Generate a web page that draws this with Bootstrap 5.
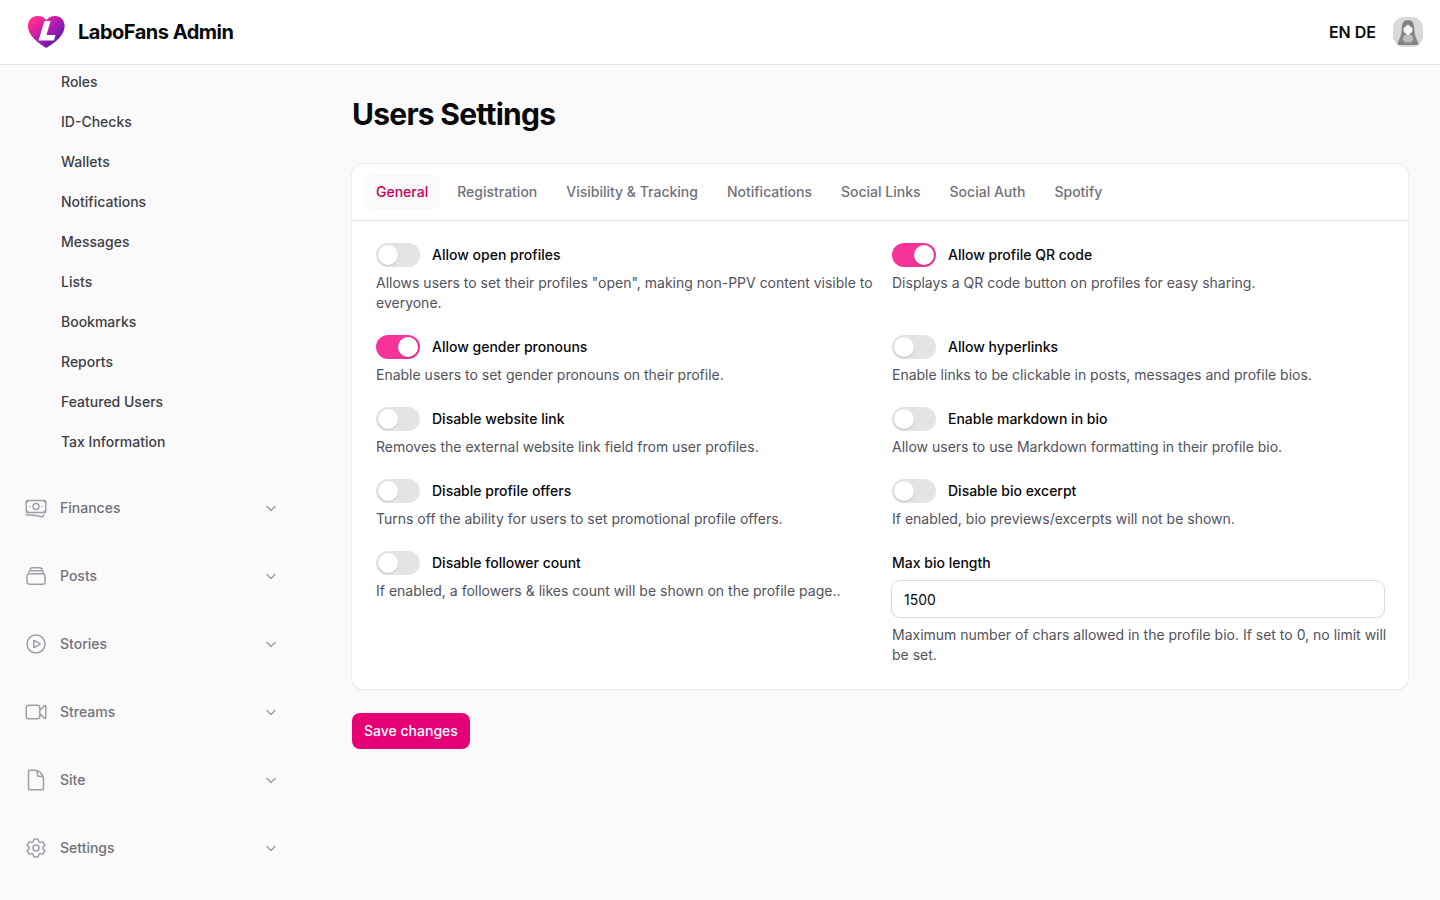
<!DOCTYPE html>
<html lang="en">
<head>
<meta charset="utf-8">
<meta name="viewport" content="width=device-width, initial-scale=1">
<title>Users Settings - LaboFans Admin</title>
<link href="https://cdn.jsdelivr.net/npm/bootstrap@5.3.0/dist/css/bootstrap.min.css" rel="stylesheet">
<style>
:root{--pink-500:#f6339a;--pink-600:#e60076;--pink-700:#c6005c;--ink:#09090b;--line:#e4e4e7}
body{font-family:Inter,"Liberation Sans",sans-serif;font-size:14px;line-height:20px;color:var(--ink);background:#fafafa}
a{text-decoration:none;color:inherit}
.topbar{height:64px;padding:0 16px 0 28px;box-shadow:0 1px 0 var(--line);z-index:1020}
.brand-name{font-size:20px;line-height:28px;font-weight:700;letter-spacing:-.025em}
.lang{font-size:16px;line-height:24px;font-weight:600}
.side{width:320px;padding:0 32px 24px 24px}
.side .sub-link{display:block;padding:8px 12px;color:#3f3f46;font-weight:500}
.side .sub-list{padding-left:25px}
.groups{gap:28px;padding-top:28px}
.group-btn{height:40px;gap:12px;padding:0 9px 0 0;border:0;background:none;color:#71717b;font-weight:500;text-align:left}
.side svg{fill:none;stroke:#9f9fa9;stroke-width:1.5;stroke-linecap:round;stroke-linejoin:round}
.page-main{min-width:0;padding:32px}
h1{font-size:30px;line-height:36px;font-weight:700;letter-spacing:-.025em}
.page-title{margin-bottom:32px}
.panel{border-radius:12px;background:#fff;box-shadow:0 0 0 1px #ececee,0 1px 2px 0 rgba(0,0,0,.08)}
.tab-bar{gap:5px;padding:10px 12px;border-bottom:1px solid var(--line)}
.tab-btn{padding:8px 12px;border:0;border-radius:8px;background:none;color:#71717b;font-weight:500}
.tab-btn.active{background:#fafafa;color:var(--pink-700)}
.fields{padding:22px 24px 24px}
.fields-row{--bs-gutter-x:24px;row-gap:22px}
.field-label{font-weight:500;line-height:24px}
.hint{color:#52525c;margin:6px -8px 0 0}
.switch-row{gap:12px;min-height:24px;padding:0;margin:0}
.form-switch .form-check-input{width:44px;height:24px;margin:0;border:0;float:none;background-color:var(--line);background-image:none;position:relative;flex:none}
.form-switch .form-check-input::after{content:"";position:absolute;top:2px;left:2px;width:20px;height:20px;border-radius:50%;background:#fff;box-shadow:0 1px 2px rgba(0,0,0,.15)}
.form-switch .form-check-input:checked{background-color:var(--pink-500);background-image:none}
.form-switch .form-check-input:checked::after{left:22px}
.text-field{height:36px;margin-top:6px;padding:0 12px;border:0;border-radius:8px;font-size:14px;line-height:20px;color:var(--ink);box-shadow:0 0 0 1px #dcdcdf,0 1px 2px 0 rgba(0,0,0,.1)}
.text-field + .hint{margin-top:8px}
.save-btn{height:36px;padding:0 12px;border:0;border-radius:8px;background:var(--pink-600);color:#fff;font-size:14px;line-height:20px;font-weight:500;margin-top:24px}
</style>
</head>
<body>
<header class="topbar bg-white sticky-top d-flex align-items-center justify-content-between">
  <a href="#" class="d-flex align-items-center">
    <svg width="38" height="34" viewBox="0 0 38 34" aria-hidden="true">
      <defs><linearGradient id="heart" x1="0" y1="0" x2="1" y2="1"><stop offset=".15" stop-color="#ff2a92"/><stop offset=".55" stop-color="#a31cb4"/><stop offset=".9" stop-color="#4b1a9e"/></linearGradient></defs>
      <path fill="url(#heart)" d="M18.300 33C13 29.500 0 22 0 11 0 5 4.300 1 9.500 1c4 0 7 1.500 8.800 4.200C20.100 2.500 23.300 1 27.300 1 32.500 1 36.600 5 36.600 11 36.600 22 23.600 29.500 18.300 33Z"/>
      <path fill="#fff" d="M16.500 6h6L18.500 20H27.500L26 25.500H10.500Z"/>
    </svg>
    <span class="brand-name ms-2 ps-1">LaboFans Admin</span>
  </a>
  <div class="d-flex align-items-center gap-3">
    <nav class="lang" aria-label="Language"><a href="#en">EN</a> <a href="#de">DE</a></nav>
    <a href="#profile" aria-label="Profile" class="d-block lh-1">
      <svg width="32" height="32" viewBox="0 0 32 32"><defs><clipPath id="av"><rect x="1" y="1" width="30" height="30" rx="11"/></clipPath></defs>
      <g clip-path="url(#av)"><path fill="#d9d9d9" d="M0 0h32v32H0z"/>
      <path fill="#858585" d="M16 4c-4.500 0-6 3.500-6.200 8-.2 6-1.300 9-3.800 14l-.5 3h21l-.5-3c-2.500-5-3.600-8-3.800-14C22 7.500 20.500 4 16 4Z"/>
      <path fill="#bdbdbd" d="M12 19.500l4-2 4 2 1.500 3.500-2.500 3.500h-6L10.500 23Z"/>
      <path fill="#f6f6f6" d="M16 8.500l4.700 4-.7 3.500-4 3.500-4-3.500-.7-3.500Z"/></g></svg>
    </a>
  </div>
</header>

<div class="d-flex">
  <aside class="side flex-shrink-0 d-none d-md-block">
    <nav aria-label="Main">
      <ul class="sub-list list-unstyled d-flex flex-column gap-1 mb-0">
        <li><a class="sub-link" href="#">Roles</a></li>
        <li><a class="sub-link" href="#">ID-Checks</a></li>
        <li><a class="sub-link" href="#">Wallets</a></li>
        <li><a class="sub-link" href="#">Notifications</a></li>
        <li><a class="sub-link" href="#">Messages</a></li>
        <li><a class="sub-link" href="#">Lists</a></li>
        <li><a class="sub-link" href="#">Bookmarks</a></li>
        <li><a class="sub-link" href="#">Reports</a></li>
        <li><a class="sub-link" href="#">Featured Users</a></li>
        <li><a class="sub-link" href="#">Tax Information</a></li>
      </ul>
      <div class="groups d-flex flex-column">
        <button type="button" class="group-btn d-flex align-items-center"><svg width="24" height="24" viewBox="0 0 24 24"><path d="M2.250 18.750a60.070 60.070 0 0 1 15.797 2.101c.727.198 1.453-.342 1.453-1.096V18.750M3.750 4.500v.750A.750.750 0 0 1 3 6h-.750m0 0v-.375c0-.621.504-1.125 1.125-1.125H20.250M2.250 6v9m18-10.500v.750c0 .414.336.750.750.750h.750m-1.500-1.500h.375c.621 0 1.125.504 1.125 1.125v9.750c0 .621-.504 1.125-1.125 1.125h-.375m1.500-1.500H21a.750.750 0 0 0-.750.750v.750m0 0H3.750m0 0h-.375a1.125 1.125 0 0 1-1.125-1.125V15m1.500 1.500v-.750A.750.750 0 0 0 3 15h-.750M15 10.500a3 3 0 1 1-6 0 3 3 0 0 1 6 0Zm3 0h.008v.008H18V10.500Zm-12 0h.008v.008H6V10.500Z"/></svg><span class="flex-grow-1">Finances</span><svg width="16" height="16" viewBox="0 0 16 16"><path d="m4 6.500 4 4 4-4"/></svg></button>
        <button type="button" class="group-btn d-flex align-items-center"><svg width="24" height="24" viewBox="0 0 24 24"><path d="M6 6.878V6a2.250 2.250 0 0 1 2.250-2.250h7.500A2.250 2.250 0 0 1 18 6v.878m-12 0c.235-.083.487-.128.750-.128h10.500c.263 0 .515.045.750.128m-12 0A2.250 2.250 0 0 0 4.500 9v.878m13.500-3A2.250 2.250 0 0 1 19.500 9v.878m0 0a2.246 2.246 0 0 0-.750-.128H5.250c-.263 0-.515.045-.750.128m15 0A2.250 2.250 0 0 1 21 12v6a2.250 2.250 0 0 1-2.250 2.250H5.250A2.250 2.250 0 0 1 3 18v-6c0-.980.626-1.813 1.500-2.122"/></svg><span class="flex-grow-1">Posts</span><svg width="16" height="16" viewBox="0 0 16 16"><path d="m4 6.500 4 4 4-4"/></svg></button>
        <button type="button" class="group-btn d-flex align-items-center"><svg width="24" height="24" viewBox="0 0 24 24"><path d="M21 12a9 9 0 1 1-18 0 9 9 0 0 1 18 0Z"/><path d="M15.910 11.672a.375.375 0 0 1 0 .656l-5.603 3.113a.375.375 0 0 1-.557-.328V8.887c0-.286.307-.466.557-.327l5.603 3.112Z"/></svg><span class="flex-grow-1">Stories</span><svg width="16" height="16" viewBox="0 0 16 16"><path d="m4 6.500 4 4 4-4"/></svg></button>
        <button type="button" class="group-btn d-flex align-items-center"><svg width="24" height="24" viewBox="0 0 24 24"><path d="m15.750 10.500 4.720-4.720a.750.750 0 0 1 1.280.530v11.380a.750.750 0 0 1-1.280.530l-4.720-4.720M4.500 18.750h9a2.250 2.250 0 0 0 2.250-2.250v-9a2.250 2.250 0 0 0-2.250-2.250h-9A2.250 2.250 0 0 0 2.250 7.500v9a2.250 2.250 0 0 0 2.250 2.250Z"/></svg><span class="flex-grow-1">Streams</span><svg width="16" height="16" viewBox="0 0 16 16"><path d="m4 6.500 4 4 4-4"/></svg></button>
        <button type="button" class="group-btn d-flex align-items-center"><svg width="24" height="24" viewBox="0 0 24 24"><path d="M19.500 14.250v-2.625a3.375 3.375 0 0 0-3.375-3.375h-1.500A1.125 1.125 0 0 1 13.500 7.125v-1.500a3.375 3.375 0 0 0-3.375-3.375H8.250m2.250 0H5.625c-.621 0-1.125.504-1.125 1.125v17.250c0 .621.504 1.125 1.125 1.125h12.750c.621 0 1.125-.504 1.125-1.125V11.250a9 9 0 0 0-9-9Z"/></svg><span class="flex-grow-1">Site</span><svg width="16" height="16" viewBox="0 0 16 16"><path d="m4 6.500 4 4 4-4"/></svg></button>
        <button type="button" class="group-btn d-flex align-items-center"><svg width="24" height="24" viewBox="0 0 24 24"><path d="M9.594 3.940c.090-.542.560-.940 1.110-.940h2.593c.550 0 1.020.398 1.110.940l.213 1.281c.063.374.313.686.645.870.074.040.147.083.220.127.325.196.720.257 1.075.124l1.217-.456a1.125 1.125 0 0 1 1.370.490l1.296 2.247a1.125 1.125 0 0 1-.260 1.431l-1.003.827c-.293.241-.438.613-.430.992a7.723 7.723 0 0 1 0 .255c-.008.378.137.750.430.991l1.004.827c.424.350.534.955.260 1.430l-1.298 2.247a1.125 1.125 0 0 1-1.369.491l-1.217-.456c-.355-.133-.750-.072-1.076.124a6.470 6.470 0 0 1-.220.128c-.331.183-.581.495-.644.869l-.213 1.281c-.090.543-.560.940-1.110.940h-2.594c-.550 0-1.019-.398-1.110-.940l-.213-1.281c-.062-.374-.312-.686-.644-.870a6.520 6.520 0 0 1-.220-.127c-.325-.196-.720-.257-1.076-.124l-1.217.456a1.125 1.125 0 0 1-1.369-.490l-1.297-2.247a1.125 1.125 0 0 1 .260-1.431l1.004-.827c.292-.240.437-.613.430-.991a6.932 6.932 0 0 1 0-.255c.007-.380-.138-.751-.430-.992l-1.004-.827a1.125 1.125 0 0 1-.260-1.430l1.297-2.247a1.125 1.125 0 0 1 1.370-.491l1.216.456c.356.133.751.072 1.076-.124.072-.044.146-.086.220-.128.332-.183.582-.495.644-.869l.214-1.280Z"/><path d="M15 12a3 3 0 1 1-6 0 3 3 0 0 1 6 0Z"/></svg><span class="flex-grow-1">Settings</span><svg width="16" height="16" viewBox="0 0 16 16"><path d="m4 6.500 4 4 4-4"/></svg></button>
      </div>
    </nav>
  </aside>

  <main class="page-main flex-grow-1">
    <h1 class="page-title">Users Settings</h1>
    <form>
      <section class="panel">
        <div class="tab-bar d-flex flex-wrap" role="tablist">
          <button type="button" role="tab" aria-selected="true" class="tab-btn active">General</button>
          <button type="button" role="tab" class="tab-btn">Registration</button>
          <button type="button" role="tab" class="tab-btn">Visibility &amp; Tracking</button>
          <button type="button" role="tab" class="tab-btn">Notifications</button>
          <button type="button" role="tab" class="tab-btn">Social Links</button>
          <button type="button" role="tab" class="tab-btn">Social Auth</button>
          <button type="button" role="tab" class="tab-btn">Spotify</button>
        </div>
        <div class="fields">
          <div class="row fields-row">
            <div class="col-12 col-lg-6"><div class="form-check form-switch switch-row d-flex align-items-center"><input class="form-check-input" type="checkbox" role="switch" id="open"><label class="field-label" for="open">Allow open profiles</label></div><p class="hint">Allows users to set their profiles "open", making non-PPV content visible to everyone.</p></div>
            <div class="col-12 col-lg-6"><div class="form-check form-switch switch-row d-flex align-items-center"><input class="form-check-input" type="checkbox" role="switch" id="qr" checked><label class="field-label" for="qr">Allow profile QR code</label></div><p class="hint">Displays a QR code button on profiles for easy sharing.</p></div>
            <div class="col-12 col-lg-6"><div class="form-check form-switch switch-row d-flex align-items-center"><input class="form-check-input" type="checkbox" role="switch" id="pronouns" checked><label class="field-label" for="pronouns">Allow gender pronouns</label></div><p class="hint">Enable users to set gender pronouns on their profile.</p></div>
            <div class="col-12 col-lg-6"><div class="form-check form-switch switch-row d-flex align-items-center"><input class="form-check-input" type="checkbox" role="switch" id="links"><label class="field-label" for="links">Allow hyperlinks</label></div><p class="hint">Enable links to be clickable in posts, messages and profile bios.</p></div>
            <div class="col-12 col-lg-6"><div class="form-check form-switch switch-row d-flex align-items-center"><input class="form-check-input" type="checkbox" role="switch" id="website"><label class="field-label" for="website">Disable website link</label></div><p class="hint">Removes the external website link field from user profiles.</p></div>
            <div class="col-12 col-lg-6"><div class="form-check form-switch switch-row d-flex align-items-center"><input class="form-check-input" type="checkbox" role="switch" id="markdown"><label class="field-label" for="markdown">Enable markdown in bio</label></div><p class="hint">Allow users to use Markdown formatting in their profile bio.</p></div>
            <div class="col-12 col-lg-6"><div class="form-check form-switch switch-row d-flex align-items-center"><input class="form-check-input" type="checkbox" role="switch" id="offers"><label class="field-label" for="offers">Disable profile offers</label></div><p class="hint">Turns off the ability for users to set promotional profile offers.</p></div>
            <div class="col-12 col-lg-6"><div class="form-check form-switch switch-row d-flex align-items-center"><input class="form-check-input" type="checkbox" role="switch" id="excerpt"><label class="field-label" for="excerpt">Disable bio excerpt</label></div><p class="hint">If enabled, bio previews/excerpts will not be shown.</p></div>
            <div class="col-12 col-lg-6"><div class="form-check form-switch switch-row d-flex align-items-center"><input class="form-check-input" type="checkbox" role="switch" id="followers"><label class="field-label" for="followers">Disable follower count</label></div><p class="hint">If enabled, a followers &amp; likes count will be shown on the profile page..</p></div>
            <div class="col-12 col-lg-6"><label class="field-label d-block" for="bio">Max bio length</label><input class="form-control text-field" type="text" inputmode="numeric" id="bio" value="1500"><p class="hint">Maximum number of chars allowed in the profile bio. If set to 0, no limit will be set.</p></div>
          </div>
        </div>
      </section>
      <button type="submit" class="save-btn">Save changes</button>
    </form>
  </main>
</div>
<script src="https://cdn.jsdelivr.net/npm/bootstrap@5.3.0/dist/js/bootstrap.bundle.min.js"></script>
</body>
</html>
